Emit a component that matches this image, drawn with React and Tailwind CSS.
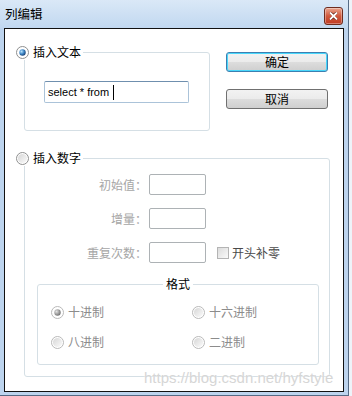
import { useId } from "react";

const cjk = "font-['Noto_Sans_CJK_SC','Noto_Sans',sans-serif]";

function Radio({ checked = false, disabled = false }) {
    const id = useId().replace(/:/g, "");
    const ring = disabled ? "#b9b9b9" : "#8e8f8f";
    return (
        <svg width="13" height="13" viewBox="0 0 13 13" className="shrink-0 block">
            <defs>
                <linearGradient id={`f${id}`} x1="0" y1="0" x2="1" y2="1">
                    <stop offset="0" stopColor="#d6d6d6" />
                    <stop offset="1" stopColor="#fbfbfb" />
                </linearGradient>
                <radialGradient id={`d${id}`} cx="0.35" cy="0.35" r="0.7">
                    <stop offset="0" stopColor={disabled ? "#e2e2e2" : "#b8e2fb"} />
                    <stop offset="0.55" stopColor={disabled ? "#a3a3a3" : "#3d86c6"} />
                    <stop offset="1" stopColor={disabled ? "#6f6f6f" : "#173f73"} />
                </radialGradient>
            </defs>
            <circle cx="6.5" cy="6.5" r="6" fill="#fff" stroke={ring} strokeWidth="1" />
            <circle cx="6.5" cy="6.5" r="4.6" fill={checked ? "#fff" : `url(#f${id})`} />
            {checked && <circle cx="6.5" cy="6.5" r="3.2" fill={`url(#d${id})`} />}
        </svg>
    );
}

function Button({ children, primary }) {
    return (
        <button
            className={`w-[102px] h-[20px] rounded-[3px] border text-[12px] leading-none text-black bg-[linear-gradient(#f2f2f2,#ebebeb_50%,#dddddd_50%,#cfcfcf)] ${
                primary ? "border-[#3c7fb1] shadow-[inset_0_0_0_1px_#48d7fb]" : "border-[#707070]"
            }`}
        >
            {children}
        </button>
    );
}

function Field() {
    return <div className="ml-[2px] w-[57px] h-[21px] rounded-[2px] border border-[#adb2b5] bg-white" />;
}

export default function App() {
    const rows = [
        { label: "初始值：" },
        { label: "增量：" },
        { label: "重复次数：", zero: true },
    ];

    return (
        <div className={`w-[352px] h-[396px] bg-[#eef3f9] ${cjk} text-[12px]`}>
            <div className="w-[349px] h-[396px] bg-[#bdd4ee] border-r border-b border-[#566b85]">
                {/* title bar */}
                <div className="h-[28px] flex items-start justify-between pl-[5px] pr-[5px] bg-gradient-to-b from-[#dae8f7] to-[#c1d8f0]">
                    <span className="mt-[5px] text-[12.5px] leading-[18px] text-black">列编辑</span>
                    <div className="mt-[7px] w-[19px] h-[18px] rounded-[3px] border border-[#6e2c1f] bg-gradient-to-b from-[#e9a58f] via-[#d0583c] to-[#c03a22] flex items-center justify-center shadow-[inset_0_0_0_1px_rgba(255,255,255,0.35)]">
                        <svg width="9" height="8" viewBox="0 0 9 8">
                            <path d="M1 0.5 L4.5 3.2 L8 0.5 M1 7.5 L4.5 4.8 L8 7.5" stroke="#5a2015" strokeWidth="2.6" fill="none" />
                            <path d="M1 0.5 L8 7.5 M8 0.5 L1 7.5" stroke="#fff" strokeWidth="1.8" fill="none" />
                        </svg>
                    </div>
                </div>

                {/* client area */}
                <div className="relative ml-[4px] w-[340px] h-[364px] border border-[#111] bg-white">
                    <div className="flex items-start">
                        <fieldset className="ml-[19px] mt-[15px] w-[186px] h-[87px] rounded-[3px] border border-[#d5dfe5]">
                            <legend className="-ml-[9px] pr-[2px] bg-white">
                                <span className="flex items-center h-[16px]">
                                    <Radio checked />
                                    <span className="ml-[4px] text-black leading-[16px]">插入文本</span>
                                </span>
                            </legend>
                            <div className="ml-[19px] mt-[21px] w-[145px] h-[22px] rounded-[2px] border border-[#abc3d9] border-t-[#6f8fae] flex items-center pl-[3px] font-['Liberation_Sans',sans-serif] text-[11px] text-black">
                                select * from
                                <span className="ml-[4px] w-px h-[15px] bg-black" />
                            </div>
                        </fieldset>

                        <div className="ml-[16px] mt-[23px] flex flex-col gap-[17px]">
                            <Button primary>确定</Button>
                            <Button>取消</Button>
                        </div>
                    </div>

                    <fieldset className="ml-[19px] mt-[19px] w-[306px] h-[227px] rounded-[3px] border border-[#d5dfe5]">
                        <legend className="-ml-[9px] pr-[2px] bg-white">
                            <span className="flex items-center h-[16px]">
                                <Radio />
                                <span className="ml-[4px] text-black leading-[16px]">插入数字</span>
                            </span>
                        </legend>

                        <div className="mt-[8px] flex flex-col gap-[13px]">
                            {rows.map((row) => (
                                <div key={row.label} className="flex items-center h-[21px]">
                                    <span className="w-[122px] text-right text-[#a6a6a6] leading-none">{row.label}</span>
                                    <Field />
                                    {row.zero && (
                                        <div className="ml-[11px] flex items-center">
                                            <span className="w-[12px] h-[12px] border border-[#b4b4b4] bg-gradient-to-br from-[#dcdcdc] to-[#fafafa]" />
                                            <span className="ml-[3px] text-[#4a4a4a] leading-none">开头补零</span>
                                        </div>
                                    )}
                                </div>
                            ))}
                        </div>

                        <fieldset className="ml-[12px] mt-[13px] w-[282px] h-[89px] rounded-[3px] border border-[#d5dfe5]">
                            <legend className="mx-auto px-[3px] leading-[16px] text-black">格式</legend>
                            <div className="mt-[12px] grid grid-cols-[141px_1fr] gap-y-[14px] pl-[13px]">
                                {[
                                    ["十进制", true],
                                    ["十六进制", false],
                                    ["八进制", false],
                                    ["二进制", false],
                                ].map(([label, checked]) => (
                                    <div key={label} className="flex items-center h-[16px]">
                                        <Radio checked={checked} disabled />
                                        <span className="ml-[4px] text-[#8c8c8c] leading-none">{label}</span>
                                    </div>
                                ))}
                            </div>
                        </fieldset>
                    </fieldset>

                    {/* watermark */}
                    <span className="absolute left-[139px] top-[340px] font-['Liberation_Sans',sans-serif] text-[15px] leading-[18px] text-[#d6d6d6] [text-shadow:0_0_2px_#fff]">
                        https://blog.csdn.net/hyfstyle
                    </span>
                </div>
            </div>
        </div>
    );
}
